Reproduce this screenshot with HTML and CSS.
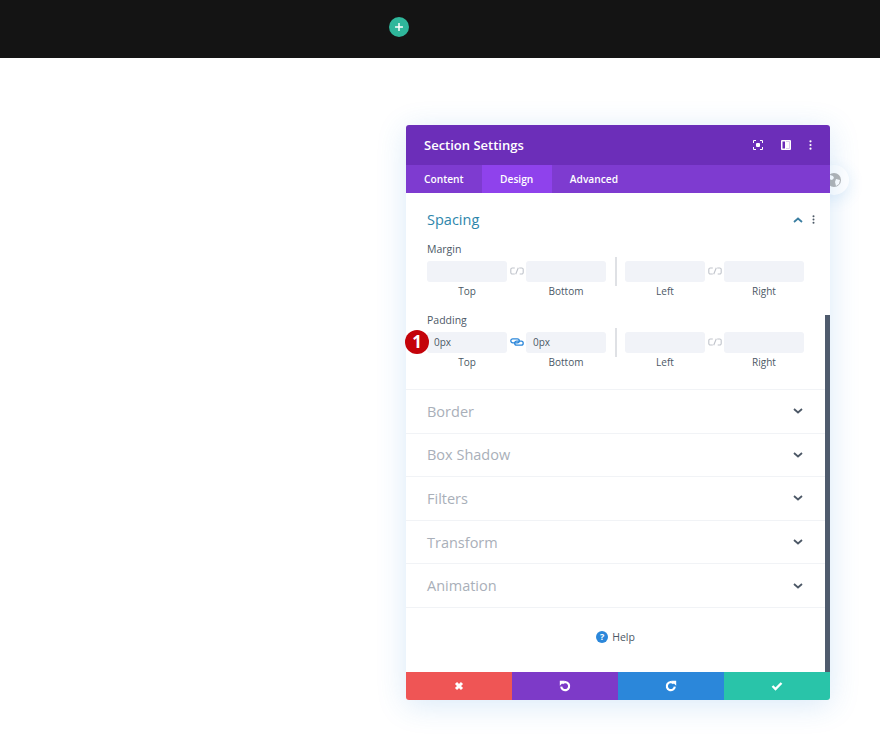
FILE: index.html
```html
<!DOCTYPE html>
<html>
<head>
    <title>Section Settings</title>
    <link rel="stylesheet" href="styles.css">
</head>
<body>
    <div class="topbar">
        <div class="add-btn">
            <svg width="8" height="8" viewBox="0 0 8 8"><path d="M4 .5v7M.5 4h7" stroke="#fff" stroke-width="1.500" stroke-linecap="round"/></svg>
        </div>
    </div>
    <div class="stage">
        <div class="modal-wrap">
            <div class="globe">
                <svg width="14" height="14" viewBox="0 0 14 14"><circle cx="7" cy="7" r="7" fill="#b4b4b4"/><path d="M3 2l3 1 1 2-2 2-3-1-1-2zM9 6l4 1-1 4-3 2-1-4z" fill="#fff"/></svg>
            </div>
            <div class="modal">
                <div class="modal-head">
                    <span class="modal-title">Section Settings</span>
                    <div class="head-icons">
                        <svg width="10" height="10" viewBox="0 0 10 10"><path d="M.5 3V.5H3M7 .5h2.500V3M9.500 7v2.500H7M3 9.500H.5V7" fill="none" stroke="#fff"/><rect x="3" y="3" width="4" height="4" rx="1" fill="#fff"/></svg>
                        <svg width="10" height="10" viewBox="0 0 10 10"><path d="M0 1a1 1 0 0 1 1-1h8a1 1 0 0 1 1 1v8a1 1 0 0 1-1 1H1a1 1 0 0 1-1-1zM4 1.500H1.500v7H4zM5 1.500v7h3.500v-7z" fill="#fff" fill-rule="evenodd"/><rect x="5" y="1.500" width="3.500" height="7" fill="#fff"/></svg>
                        <svg width="3" height="10" viewBox="0 0 3 10"><circle cx="1.500" cy="1.300" r="1.100" fill="#fff"/><circle cx="1.500" cy="5" r="1.100" fill="#fff"/><circle cx="1.500" cy="8.700" r="1.100" fill="#fff"/></svg>
                    </div>
                </div>
                <div class="tabs">
                    <div class="tab">Content</div>
                    <div class="tab active">Design</div>
                    <div class="tab">Advanced</div>
                </div>
                <div class="modal-body">
                    <div class="scrollbar"></div>
                    <div class="section open">
                        <div class="section-head">
                            <span class="section-title blue">Spacing</span>
                            <svg class="chev" width="10" height="6" viewBox="0 0 10 6"><path d="M1 5l4-3.500L9 5" fill="none" stroke="#3b7ea1" stroke-width="1.800"/></svg>
                            <svg class="dots" width="3" height="9" viewBox="0 0 3 9"><circle cx="1.500" cy="1.200" r="1" fill="#4c5866"/><circle cx="1.500" cy="4.500" r="1" fill="#4c5866"/><circle cx="1.500" cy="7.800" r="1" fill="#4c5866"/></svg>
                        </div>
                        <div class="field-label">Margin</div>
                        <div class="quad">
                            <div class="pair">
                                <div class="box"><div class="input"></div><div class="cap">Top</div></div>
                                <svg class="link" width="14" height="8" viewBox="0 0 14 8"><path d="M4.800 1H2.300A1.500 1.500 0 0 0 .8 2.500v3A1.500 1.500 0 0 0 2.300 7h2.500M9.200 1h2.500a1.500 1.500 0 0 1 1.500 1.500v3A1.500 1.500 0 0 1 11.700 7h-2M8.300 .8L5.700 7.200" fill="none" stroke="#c0c4cb" stroke-width="1.100"/></svg>
                                <div class="box"><div class="input"></div><div class="cap">Bottom</div></div>
                            </div>
                            <div class="divider"></div>
                            <div class="pair">
                                <div class="box"><div class="input"></div><div class="cap">Left</div></div>
                                <svg class="link" width="14" height="8" viewBox="0 0 14 8"><path d="M4.800 1H2.300A1.500 1.500 0 0 0 .8 2.500v3A1.500 1.500 0 0 0 2.300 7h2.500M9.200 1h2.500a1.500 1.500 0 0 1 1.500 1.500v3A1.500 1.500 0 0 1 11.700 7h-2M8.300 .8L5.700 7.200" fill="none" stroke="#c0c4cb" stroke-width="1.100"/></svg>
                                <div class="box"><div class="input"></div><div class="cap">Right</div></div>
                            </div>
                        </div>
                        <div class="field-label second">Padding</div>
                        <div class="quad">
                            <div class="badge">1</div>
                            <div class="pair">
                                <div class="box"><div class="input">0px</div><div class="cap">Top</div></div>
                                <svg class="link" width="14" height="8" viewBox="0 0 14 8"><rect x=".8" y=".8" width="8.500" height="4" rx="2" fill="none" stroke="#2b87da" stroke-width="1.300"/><rect x="4.700" y="3.200" width="8.500" height="4" rx="2" fill="none" stroke="#2b87da" stroke-width="1.300"/></svg>
                                <div class="box"><div class="input">0px</div><div class="cap">Bottom</div></div>
                            </div>
                            <div class="divider"></div>
                            <div class="pair">
                                <div class="box"><div class="input"></div><div class="cap">Left</div></div>
                                <svg class="link" width="14" height="8" viewBox="0 0 14 8"><path d="M4.800 1H2.300A1.500 1.500 0 0 0 .8 2.500v3A1.500 1.500 0 0 0 2.300 7h2.500M9.200 1h2.500a1.500 1.500 0 0 1 1.500 1.500v3A1.500 1.500 0 0 1 11.700 7h-2M8.300 .8L5.700 7.200" fill="none" stroke="#c0c4cb" stroke-width="1.100"/></svg>
                                <div class="box"><div class="input"></div><div class="cap">Right</div></div>
                            </div>
                        </div>
                    </div>
                    <div class="section">
                        <span class="section-title">Border</span>
                        <svg class="chev" width="10" height="6" viewBox="0 0 10 6"><path d="M1 1l4 3.500L9 1" fill="none" stroke="#4c5866" stroke-width="1.800"/></svg>
                    </div>
                    <div class="section">
                        <span class="section-title">Box Shadow</span>
                        <svg class="chev" width="10" height="6" viewBox="0 0 10 6"><path d="M1 1l4 3.500L9 1" fill="none" stroke="#4c5866" stroke-width="1.800"/></svg>
                    </div>
                    <div class="section">
                        <span class="section-title">Filters</span>
                        <svg class="chev" width="10" height="6" viewBox="0 0 10 6"><path d="M1 1l4 3.500L9 1" fill="none" stroke="#4c5866" stroke-width="1.800"/></svg>
                    </div>
                    <div class="section">
                        <span class="section-title">Transform</span>
                        <svg class="chev" width="10" height="6" viewBox="0 0 10 6"><path d="M1 1l4 3.500L9 1" fill="none" stroke="#4c5866" stroke-width="1.800"/></svg>
                    </div>
                    <div class="section">
                        <span class="section-title">Animation</span>
                        <svg class="chev" width="10" height="6" viewBox="0 0 10 6"><path d="M1 1l4 3.500L9 1" fill="none" stroke="#4c5866" stroke-width="1.800"/></svg>
                    </div>
                    <div class="help">
                        <span class="help-icon">?</span>
                        <span>Help</span>
                    </div>
                </div>
                <div class="modal-foot">
                    <div class="foot-btn red">
                        <svg width="10" height="10" viewBox="0 0 10 10"><path d="M2 2l6 6M8 2L2 8" stroke="#fff" stroke-width="3"/></svg>
                    </div>
                    <div class="foot-btn purple">
                        <svg width="12" height="12" viewBox="0 0 12 12"><path d="M3.200 3.500a4 4 0 1 1-1 3.200" fill="none" stroke="#fff" stroke-width="2.200"/><path d="M.8 .8h5l-5 5z" fill="#fff"/></svg>
                    </div>
                    <div class="foot-btn blue-btn">
                        <svg width="12" height="12" viewBox="0 0 12 12"><path d="M8.800 3.500a4 4 0 1 0 1 3.200" fill="none" stroke="#fff" stroke-width="2.200"/><path d="M11.200 .8h-5l5 5z" fill="#fff"/></svg>
                    </div>
                    <div class="foot-btn teal">
                        <svg width="12" height="10" viewBox="0 0 12 10"><path d="M1.500 5l3 3 6-6" fill="none" stroke="#fff" stroke-width="2.400"/></svg>
                    </div>
                </div>
            </div>
        </div>
    </div>
</body>
</html>
```
FILE: styles.css
```css
html, body {
    margin: 0;
    height: 100%;
    overflow: hidden;
}
body {
    background-color: #fff;
    font-family: "Open Sans", sans-serif;
    color: #4c5866;
}
.topbar {
    height: 58px;
    background-color: #141414;
    display: flex;
    justify-content: center;
    align-items: center;
    padding-right: 82px;
    padding-bottom: 4px;
    box-sizing: border-box;
}
.add-btn {
    width: 20px;
    height: 20px;
    border-radius: 50%;
    background-color: #2fb79b;
    display: flex;
    align-items: center;
    justify-content: center;
}
.stage {
    padding: 67px 0 0 406px;
}
.modal-wrap {
    position: relative;
    width: 424px;
}
.globe {
    position: absolute;
    top: 40px;
    right: -19px;
    width: 30px;
    height: 30px;
    border-radius: 50%;
    background-color: #fff;
    box-shadow: 0 4px 16px rgba(43, 135, 218, 0.15);
    display: flex;
    align-items: center;
    justify-content: flex-end;
    padding-right: 8px;
    box-sizing: border-box;
}
.modal {
    position: relative;
    height: 575px;
    display: flex;
    flex-direction: column;
    background-color: #fff;
    border-radius: 3px;
    box-shadow: 0 5px 30px rgba(43, 135, 218, 0.18);
}
.modal-head {
    height: 40px;
    flex: none;
    background-color: #6c2eb9;
    border-radius: 3px 3px 0 0;
    display: flex;
    align-items: center;
    justify-content: space-between;
    padding: 0 18px;
    color: #fff;
}
.modal-title {
    font-size: 13px;
    font-weight: 600;
}
.head-icons {
    display: flex;
    align-items: center;
    gap: 18px;
}
.tabs {
    height: 28px;
    flex: none;
    background-color: #7e3bd0;
    display: flex;
    color: #fff;
    font-size: 10.2px;
    font-weight: 600;
}
.tab {
    padding: 0 18px;
    line-height: 28px;
}
.tab.active {
    background-color: #8f42ec;
    padding: 0 18.5px;
}
.modal-body {
    position: relative;
    flex: 1;
}
.scrollbar {
    position: absolute;
    top: 122px;
    right: 0;
    bottom: 0;
    width: 5px;
    background-color: #4f5b6d;
    z-index: 1;
}
.section {
    height: 43.6px;
    box-sizing: border-box;
    border-bottom: 1px solid #f1f3f6;
    display: flex;
    align-items: center;
    padding: 0 27px 0 21px;
    position: relative;
}
.section.open {
    display: block;
    height: 197px;
    padding: 0 0 0 21px;
}
.section-head {
    height: 49px;
    box-sizing: border-box;
    display: flex;
    align-items: center;
    padding: 4px 15px 0 0;
}
.section-title {
    font-size: 14.5px;
    color: #a9afb9;
    flex: 1;
}
.section-title.blue {
    color: #2e86ab;
}
.dots {
    margin-left: 9px;
}
.field-label {
    font-size: 10.5px;
    font-weight: 500;
    line-height: 14px;
    margin-bottom: 5px;
}
.field-label.second {
    margin-top: 15px;
}
.quad {
    position: relative;
    display: flex;
    align-items: flex-start;
}
.pair {
    display: flex;
    align-items: flex-start;
}
.box {
    width: 80px;
}
.input {
    height: 21px;
    background-color: #f1f3f8;
    border-radius: 3px;
    font-size: 10px;
    line-height: 21px;
    padding-left: 7px;
    box-sizing: border-box;
    color: #4c5866;
}
.cap {
    font-size: 10px;
    line-height: 14px;
    margin-top: 2px;
    text-align: center;
}
.link {
    flex: none;
    margin: 6px 2.5px 0;
}
.divider {
    width: 2px;
    height: 29px;
    background-color: #dfe1e5;
    margin: -4px 8px 0 9px;
}
.badge {
    position: absolute;
    left: -22px;
    top: -2px;
    width: 24px;
    height: 24px;
    border-radius: 50%;
    background-color: #c4030a;
    color: #fff;
    font-size: 17px;
    font-weight: 700;
    line-height: 24px;
    text-align: center;
}
.help {
    display: flex;
    align-items: center;
    justify-content: center;
    gap: 4px;
    height: 56px;
    margin-top: 1.5px;
    font-size: 10.5px;
    font-weight: 500;
    padding-right: 5px;
}
.help-icon {
    width: 12px;
    height: 12px;
    border-radius: 50%;
    background-color: #2b87da;
    color: #fff;
    font-size: 9px;
    font-weight: 700;
    line-height: 12px;
    text-align: center;
}
.modal-foot {
    position: relative;
    height: 28px;
    flex: none;
    display: flex;
    border-radius: 0 0 3px 3px;
    overflow: hidden;
    z-index: 2;
}
.foot-btn {
    flex: 1;
    display: flex;
    align-items: center;
    justify-content: center;
}
.red { background-color: #ef5555; }
.purple { background-color: #7d3ac8; }
.blue-btn { background-color: #2b87da; }
.teal { background-color: #29c4a9; }
```
